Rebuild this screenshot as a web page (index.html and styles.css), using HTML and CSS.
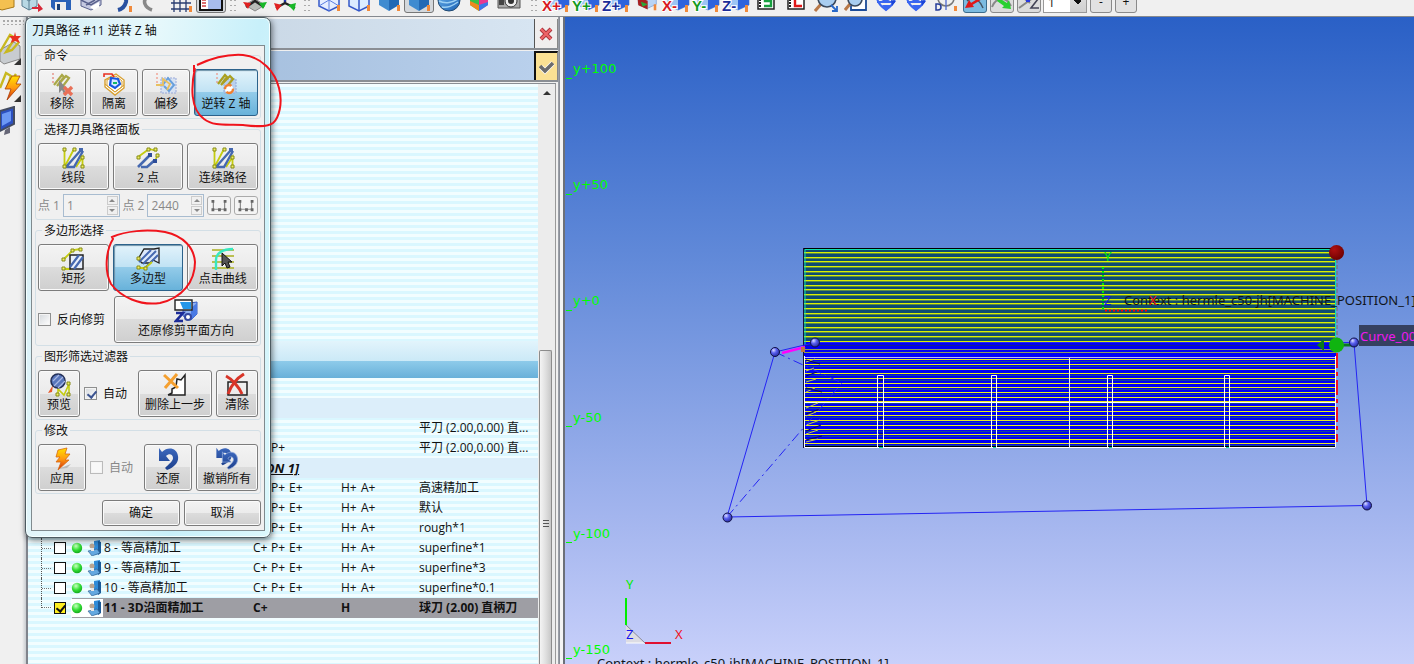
FILE: index.html
```html
<!DOCTYPE html>
<html lang="zh-CN">
<head>
<meta charset="utf-8">
<title>刀具路径 #11 逆转 Z 轴</title>
<link rel="stylesheet" href="styles.css">
</head>
<body>
<svg class="defs" aria-hidden="true">
  <defs>
    <linearGradient id="gBlue" x1="0" y1="0" x2="1" y2="1"><stop offset="0" stop-color="#6db4ee"/><stop offset="1" stop-color="#1b62b4"/></linearGradient>
    <linearGradient id="gArrow" x1="0" y1="0" x2="0" y2="1"><stop offset="0" stop-color="#3c68bd"/><stop offset="1" stop-color="#1c3f8c"/></linearGradient>
    <linearGradient id="gBolt" x1="0" y1="0" x2="0" y2="1"><stop offset="0" stop-color="#ffe000"/><stop offset=".5" stop-color="#ff9a10"/><stop offset="1" stop-color="#d02808"/></linearGradient>
    <radialGradient id="gNode" cx=".35" cy=".3" r=".8"><stop offset="0" stop-color="#d8dcff"/><stop offset=".4" stop-color="#5a60f0"/><stop offset="1" stop-color="#1c2290"/></radialGradient>
    <radialGradient id="gGreen" cx=".4" cy=".3" r=".8"><stop offset="0" stop-color="#c8ffc0"/><stop offset=".5" stop-color="#35e035"/><stop offset="1" stop-color="#0b9a18"/></radialGradient>
    <radialGradient id="gRed" cx=".35" cy=".3" r=".8"><stop offset="0" stop-color="#b01010"/><stop offset="1" stop-color="#680000"/></radialGradient>

    <symbol id="cube-solid" viewBox="0 0 24 24"><path d="M12 1 22 6 12 11 2 6z" fill="#9dd0f6"/><path d="M2 6 12 11V23L2 17z" fill="#3f8bd0"/><path d="M22 6 12 11V23l10-6z" fill="#2369b4"/><path d="M20 17h3v6h-3z" fill="#f08a3c"/></symbol>
    <symbol id="cube-wire" viewBox="0 0 24 24"><path d="M12 1 22 6v12l-10 5L2 18V6z" fill="#e6eeff" stroke="#3558c8" stroke-width="1.5"/><path d="M2 6l10 5 10-5M12 11v12M2 18l10-6 10 6" fill="none" stroke="#5c7ee0"/><path d="M20 17h3v6h-3z" fill="#f08a3c"/></symbol>
    <symbol id="cube-face" viewBox="0 0 24 24"><path d="M12 1 22 5v13l-10 5L2 18V5z" fill="#dcecff" stroke="#3558c8" stroke-width="1.5"/><path d="M2 5l10 4 10-4M12 9v14" fill="none" stroke="#3558c8" stroke-width="1.5"/><path d="M20 17h3v6h-3z" fill="#f08a3c"/></symbol>
    <symbol id="view-cube" viewBox="0 0 28 24"><path d="M16 2 27 7v10l-11 5-10-5V7z" fill="#9cc4f4" stroke="#7ea4e0"/><path d="M16 12 27 7v10l-11 5z" fill="#2e63dc"/><path d="M23 17h3v7h-3z" fill="#f08a3c"/></symbol>
    <symbol id="axes" viewBox="0 0 24 24"><path d="M12 8v7M12 15 3 20M12 15l10 5" stroke="#222" stroke-width="2.4"/><path d="M1 15l8 2-5 6z" fill="#e02020"/><path d="M23 15l-8 2 6 6z" fill="#18b828"/><path d="M12 15l-3-9h6z" fill="#2038e0"/></symbol>
    <symbol id="axes-plane" viewBox="0 0 24 24"><path d="M2 17l10-6 10 6-10 6z" fill="#b8bcb8" stroke="#888"/><path d="M12 13 3 19M12 13l9 6M12 4v9" stroke="#222" stroke-width="2.4"/><path d="M0 14l8 1-3 6z" fill="#e02020"/><path d="M24 14l-8 1 4 6z" fill="#18b828"/></symbol>
    <symbol id="lens" viewBox="0 0 24 24"><path d="M8 15 1 23" stroke="#b87848" stroke-width="3"/><circle cx="13" cy="10" r="9" fill="#a8cdf0" stroke="#39485c" stroke-width="1.6"/><path d="M8 6a7 7 0 0 1 8-2" stroke="#fff" stroke-width="2" fill="none"/><path d="M17 17l6 6m0-5v5h-5" stroke="#2868c8" stroke-width="1.8" fill="none"/></symbol>
    <symbol id="rotate" viewBox="0 0 24 24"><path d="M3 10c1 6 5 9 9 12 4-3 8-6 9-12M3 14h18M7 8c-1 6 9 6 10 0" fill="none" stroke="#3a66f0" stroke-width="2"/><path d="M8 17h9l-5 6z" fill="#3a66f0"/><path d="M17 12l5 1-4 5z" fill="#1c46d8"/></symbol>

    <symbol id="segments" viewBox="0 0 24 24"><path d="M3.500 4v17L13 3M15 21 21.500 11v10" fill="none" stroke="#c4cc10" stroke-width="1.8"/><path d="M20 4 5 21h8L22 5" fill="none" stroke="#4568b0" stroke-width="2.4"/><g fill="#eff060" stroke="#868a18"><path d="M2 2h3v3H2zM2 19h3v3H2zM12 2h3v3h-3zM20 10h3v3h-3zM20 19h3v3h-3z"/></g><path d="M18 2h4v4h-4z" fill="#4568b0"/></symbol>
    <symbol id="two-points" viewBox="0 0 24 24"><path d="M2 11 13 3l8 2" fill="none" stroke="#c4cc10" stroke-width="1.8"/><path d="M2 21 14 9M5 21h6l8-7" fill="none" stroke="#4568b0" stroke-width="2.6"/><path d="M19 15l3-7" stroke="#c4cc10" stroke-width="1.8"/><g fill="#eff060" stroke="#868a18"><path d="M1 10h3v3H1zM11 2h3v3h-3zM18 2h3v3h-3zM20 8h3v3h-3z"/></g><path d="M12 7h4v4h-4zM17 13h4v4h-4z" fill="#2d4c98"/></symbol>
    <symbol id="rect-pick" viewBox="0 0 24 24"><path d="M2 13 12 3l8-1M2 22h7l2-3" fill="none" stroke="#c4cc10" stroke-width="1.8"/><path d="M9 8h13v14H9z" fill="#e8eefa" stroke="#222" stroke-width="1.5"/><path d="M18 8 9 20m4 2 9-12" stroke="#4568b0" stroke-width="2.2"/><g fill="#eff060" stroke="#868a18"><path d="M1 11h3v3H1zM10 2h3v3h-3zM18 1h3v3h-3zM1 20h3v3H1z"/></g></symbol>
    <symbol id="poly-pick" viewBox="0 0 24 24"><path d="M2 12 8 2h10l5-1v15l-6-3-3 3H6z" fill="#dce8fa" stroke="#222" stroke-width="1.3"/><path d="M3 15 15 3M7 17 20 4m2 4L10 20" stroke="#4568b0" stroke-width="2"/><path d="M2 21h7l7-6" fill="none" stroke="#c4cc10" stroke-width="1.8"/><g fill="#eff060" stroke="#868a18"><path d="M1 10h3v3H1zM1 19h3v3H1zM8 20h3v3H8z"/></g></symbol>
    <symbol id="curve-pick" viewBox="0 0 24 24"><path d="M1 3h22M1 9h22M1 15h22M1 21h22" stroke="#aab020" stroke-width="1.6"/><path d="M5 23V13C5 6 12 2 22 2" fill="none" stroke="#38e8c0" stroke-width="2.4"/><path d="M11 6v13l3-3 2 5 3-1-2-5h4z" fill="#555" stroke="#111"/></symbol>
    <symbol id="plane-reset" viewBox="0 0 24 24"><path d="M9 5 23 3v12l-6 6-8-4z" fill="#8fb0ef" stroke="#3a5fc8"/><path d="M17 9v12l6-6V4z" fill="#4a7ae4"/><path d="M1 1h17v10H1z" fill="#fff" stroke="#222" stroke-width="1.4"/><path d="M6 3h11v7H9z" fill="#2496e8"/><path d="M2 14h7l-7 8h7" fill="none" stroke="#1c2c98" stroke-width="2.6"/><circle cx="14" cy="18" r="3" fill="#fff" stroke="#3448a0" stroke-width="2"/></symbol>
    <symbol id="preview" viewBox="0 0 24 24"><path d="M6 12 1 20l4-1z" fill="#e85828"/><path d="M11 22v-6l6 6 5-11v11" fill="none" stroke="#c4cc10" stroke-width="1.6"/><circle cx="11" cy="8" r="7" fill="#5876bc" stroke="#243058" stroke-width="1.6"/><path d="M6 8l6-6M7 13l9-9M11 15l7-7" stroke="#a8b8e4" stroke-width="1.2"/><g fill="#eff060" stroke="#868a18"><path d="M9 20h3v3H9zM20 9h3v3h-3zM20 20h3v3h-3z"/></g></symbol>
    <symbol id="delete-step" viewBox="0 0 24 24"><path d="M5 22h17V2l-4 5-4-1-1 8-4 2v4l-4 2" fill="#fff" stroke="#222" stroke-width="1.5"/><path d="M1 2l14 13M14 1 2 15" stroke="#f5a030" stroke-width="3"/></symbol>
    <symbol id="clear" viewBox="0 0 24 24"><path d="M3 9h19v13H3z" fill="none" stroke="#222" stroke-width="1.5"/><path d="M1 3c6 3 13 11 16 18M19 1C12 5 6 13 3 21" fill="none" stroke="#d83528" stroke-width="3"/></symbol>
    <symbol id="bolt" viewBox="0 0 24 24"><path d="M8 22 21 17l-4 4z" fill="#b8b8b8"/><path d="M8 3 17 1l-2 6h5l-5 6h4L8 23l3-8H6l4-5H6z" fill="url(#gBolt)" stroke="#d86810" stroke-width=".8"/></symbol>
    <symbol id="undo" viewBox="0 0 24 24"><path d="M3 1v13h11L10 9c3-3 7-2 7 2 0 3-4 6-8 10l2 2c8-3 12-8 11-14C21 1 12-1 6 5z" fill="url(#gArrow)"/></symbol>
    <symbol id="remove" viewBox="0 0 24 24"><path d="M3 1v12" stroke="#e06858" stroke-dasharray="2 2"/><path d="M4 13 12 3l2 2-7 9 9-10 3 2-6 8" stroke="#aaa848" stroke-width="2.2" fill="none"/><path d="M9 8v13l3-3 2 4 2-1-2-4h3z" fill="#888"/><path d="M14 15l8 8m0-8-8 8" stroke="#e87058" stroke-width="3.4"/></symbol>
    <symbol id="isolate" viewBox="0 0 24 24"><path d="M3 8v7l10 8 9-7V8l-8-6z" fill="#fff" stroke="#d8a030" stroke-width="1.4"/><path d="M3 12l10 8 9-7M5 8v6l8 6 7-5V9l-6-5z" fill="none" stroke="#d8a030"/><path d="M9 6l7 1 2 5-5 4-5-3z" fill="#d8e8ff" stroke="#1858e0" stroke-width="2.2"/><path d="M11 10h4v2h-4z" fill="#14b868"/><path d="M2 5V2h8l2 3" fill="none" stroke="#e83020" stroke-width="1.6"/></symbol>
    <symbol id="offset" viewBox="0 0 24 24"><path d="M3 1v12" stroke="#f0806c" stroke-dasharray="2 2"/><path d="M7 6h15v15H7z" fill="#d8e2f2" stroke="#98a8d8" stroke-dasharray="2 1"/><path d="M8 14 14 6l6 7-5 6-5-5" stroke="#68a0dc" stroke-width="2" fill="none"/><path d="M2 13h7V7l7 5-3 6" stroke="#e8c060" stroke-width="1.8" fill="none"/></symbol>
    <symbol id="reverse-z" viewBox="0 0 24 24"><path d="M3 1v12" stroke="#f0806c" stroke-dasharray="2 2"/><path d="M10 7h12v14H10z" fill="#b8d0ee" stroke="#90a8d8" stroke-dasharray="2 1"/><path d="M4 12 11 3l2 2-6 8 9-9 3 3-5 6" stroke="#aaa020" stroke-width="2.2" fill="none"/><circle cx="15" cy="17" r="4" fill="#fff" stroke="#f08030" stroke-width="2.4" stroke-dasharray="9 3"/></symbol>
    <symbol id="range" viewBox="0 0 20 16"><path d="M4 3v9h12V3" fill="none" stroke="#8c8c8c" stroke-width="1.3"/><path d="M2 2h3v3H2zM15 2h3v3h-3zM2 11h3v3H2zM9 11h3v3H9zM15 11h3v3h-3z" fill="#666"/></symbol>
    <symbol id="ball" viewBox="0 0 12 12"><circle cx="6" cy="6" r="5.2" fill="url(#gGreen)"/></symbol>
    <symbol id="machine" viewBox="0 0 16 16"><path d="M7 1l6-1v14l-6 1z" fill="#2e8bd8"/><path d="M11 1l3 1v11l-3 2z" fill="#1a5a98"/><path d="M1 11l9-2 3 4-8 3z" fill="#64a8e0" stroke="#305c88" stroke-width=".6"/><circle cx="5" cy="6" r="2.5" fill="#b8a490"/><path d="M4 8h3v3H4z" fill="#e8e8e8"/></symbol>
  </defs>
</svg>

<div class="app">
  <header class="toolbar">
    <button class="tool tool-first" aria-label="打开"><svg viewBox="0 0 24 24"><path d="M2 8h9l2-3h10v14L11 22l-9-3z" fill="#f4c050" stroke="#a87818"/></svg></button>
    <button class="tool" aria-label="导入"><svg viewBox="0 0 24 24"><path d="M3 9l6-5 9 3v11l-8 4-7-4z" fill="#b8d8e4" stroke="#587c90"/><path d="M3 9l7 4 8-6M10 13v9" fill="none" stroke="#587c90"/><path d="M13 19h6v-4l5 6-5 3v-3h-6z" fill="#d82838"/></svg></button>
    <button class="tool" aria-label="保存"><svg viewBox="0 0 24 24"><path d="M2 2h20v20H5l-3-3z" fill="#2a62b8"/><path d="M6 14h11v8H6z" fill="#eee"/><path d="M8 16h3v6H8z" fill="#184078"/></svg></button>
    <button class="tool" aria-label="打印"><svg viewBox="0 0 24 24"><path d="M2 12l9-5 11 4v6l-10 5-10-4z" fill="#c4c8e0" stroke="#58608c"/><path d="M2 12l10 5 10-6M7 17l9-5" fill="none" stroke="#58608c" stroke-width="1.5"/><path d="M11 19l9-5v5l-5 3z" fill="#fff"/></svg></button>
    <button class="tool" aria-label="撤销"><svg viewBox="0 0 24 24"><path d="M4 8c8-4 14 1 13 6-1 4-4 7-8 8" fill="none" stroke="#2850a0" stroke-width="4"/><path d="M20 18h3v6h-3z" fill="#f08a3c"/></svg></button>
    <button class="tool" aria-label="重做"><svg viewBox="0 0 24 24"><path d="M18 8C10 5 4 11 6 16c1 3 4 5 7 6" fill="none" stroke="#888" stroke-width="3.5"/></svg></button>
    <button class="tool" aria-label="网格"><svg viewBox="0 0 24 24"><path d="M2 9h20M2 15h20M2 21h20M5 4v20M11 4v20M17 4v20" stroke="#283c70" stroke-width="1.3"/><path d="M20 18h3v6h-3z" fill="#f08a3c"/></svg></button>
    <button class="tool pressed-gray" aria-label="面板"><svg viewBox="0 0 24 24"><path d="M1 1h22v21H1z" fill="#fff" stroke="#111" stroke-width="2"/><path d="M9 1h13v20H9z" fill="#a8bcec"/><path d="M3 12h4M3 15h4M3 18h4" stroke="#d04040" stroke-width="1.5"/></svg></button>
    <span class="grip"></span>
    <button class="tool" aria-label="坐标系"><svg><use href="#axes-plane"/></svg></button>
    <button class="tool" aria-label="坐标轴"><svg><use href="#axes"/></svg></button>
    <span class="grip"></span>
    <button class="tool" aria-label="线框"><svg><use href="#cube-wire"/></svg></button>
    <button class="tool" aria-label="隐藏线"><svg><use href="#cube-face"/></svg></button>
    <button class="tool" aria-label="着色"><svg><use href="#cube-solid"/></svg></button>
    <button class="tool pressed-gray" aria-label="着色加边"><svg><use href="#cube-solid"/></svg></button>
    <button class="tool" aria-label="球体"><svg viewBox="0 0 24 24"><circle cx="12" cy="12" r="11" fill="url(#gBlue)" stroke="#204870"/><path d="M2 13c6 3 14 2 20-3M5 19c6 1 10-1 16-5" fill="none" stroke="#9cd0f4" stroke-width="1.5"/></svg></button>
    <button class="tool" aria-label="颜色"><svg viewBox="0 0 24 24"><path d="M3 6l9 5v12l-9-6z" fill="#38c048"/><path d="M21 6l-9 5v12l9-6z" fill="#e83890"/><path d="M12 1l9 5-9 5-9-5z" fill="#fff080"/><path d="M3 13l9 4v6l-9-6z" fill="#f08820"/><path d="M21 14l-9 3v6l9-6z" fill="#3878e8"/></svg></button>
    <button class="tool" aria-label="截图"><svg viewBox="0 0 24 24"><path d="M1 6h22v14H1z" fill="#a8a8a8" stroke="#555"/><circle cx="14" cy="13" r="6" fill="#eee" stroke="#333"/><circle cx="14" cy="13" r="3" fill="#333"/><path d="M2 8h5v9H2z" fill="#444"/></svg></button>
    <span class="grip grip-wide"></span>
    <button class="tool" aria-label="X+"><svg class="wide"><use href="#view-cube"/><text class="axis-x" x="0" y="23">X+</text></svg></button>
    <button class="tool" aria-label="Y+"><svg class="wide"><use href="#view-cube"/><text class="axis-y" x="0" y="23">Y+</text></svg></button>
    <button class="tool" aria-label="Z+"><svg class="wide"><use href="#view-cube"/><text class="axis-z" x="0" y="23">Z+</text></svg></button>
    <button class="tool" aria-label="等轴测"><svg viewBox="0 0 28 24"><path d="M15 2 26 7v10l-11 5-10-5V7z" fill="#b8d4f4" stroke="#88a8d8"/><path d="M4 8l12 5v10L5 18z" fill="#a82020"/><path d="M8 14l8 3-6 3z" fill="#28a838"/><path d="M23 17h3v7h-3z" fill="#f08a3c"/></svg></button>
    <button class="tool" aria-label="X-"><svg class="wide"><use href="#view-cube"/><text class="axis-x" x="0" y="23">X-</text></svg></button>
    <button class="tool" aria-label="Y-"><svg class="wide"><use href="#view-cube"/><text class="axis-y" x="0" y="23">Y-</text></svg></button>
    <button class="tool" aria-label="Z-"><svg class="wide"><use href="#view-cube"/><text class="axis-z" x="0" y="23">Z-</text></svg></button>
    <button class="tool" aria-label="S"><svg viewBox="0 0 24 24"><path d="M4 1h16v20H4z" fill="#fff" stroke="#222" stroke-width="1.5"/><path d="M6 2v18" stroke="#222" stroke-width="2" stroke-dasharray="2 1"/><path d="M18 9h-7v4h6v5h-7" fill="none" stroke="#18a040" stroke-width="2.4"/></svg></button>
    <button class="tool" aria-label="L"><svg viewBox="0 0 24 24"><path d="M4 1h16v20H4z" fill="#fff" stroke="#222" stroke-width="1.5"/><path d="M6 2v18" stroke="#222" stroke-width="2" stroke-dasharray="2 1"/><path d="M11 6v12h7" fill="none" stroke="#e01818" stroke-width="2.4"/></svg></button>
    <button class="tool" aria-label="缩放"><svg><use href="#lens"/></svg></button>
    <button class="tool" aria-label="窗口缩放"><svg viewBox="0 0 24 24"><path d="M7 2h15v20H7z" fill="#fff" stroke="#1c4c98" stroke-width="1.8"/><path d="M6 16 1 22" stroke="#b87848" stroke-width="3"/><circle cx="11" cy="11" r="7" fill="#a8cdf0" stroke="#39485c" stroke-width="1.6"/></svg></button>
    <button class="tool" aria-label="旋转"><svg><use href="#rotate"/></svg></button>
    <button class="tool" aria-label="自由旋转"><svg><use href="#rotate"/></svg></button>
    <button class="tool" aria-label="直径"><svg viewBox="0 0 24 24"><circle cx="12" cy="10" r="8" fill="none" stroke="#777" stroke-width="1.6"/><path d="M12 1v21" stroke="#4c68d0" stroke-width="1.3"/><path d="M2 16h2c4 0 4 6 0 6H2z" fill="none" stroke="#243c98" stroke-width="1.5"/><path d="M20 18h3v5h-3z" fill="#f08a3c"/></svg></button>
    <button class="toggle toggle-on" aria-label="捕捉 X"><svg viewBox="0 0 24 24"><path d="M4 13c5-4 12-3 16 7" stroke="#456" stroke-width="1.5" fill="none"/><path d="M2 20l4-8 5 7z" fill="#e01818"/><path d="M7 17l10-6" stroke="#e01818" stroke-width="2.6"/></svg></button>
    <button class="toggle" aria-label="捕捉 Y"><svg viewBox="0 0 24 24"><path d="M2 19C6 9 16 8 21 18" stroke="#888" stroke-width="2" fill="none"/><path d="M9 10l8 5 2-3 2 9-9-1 2-2-7-5z" fill="#28d030"/></svg></button>
    <button class="toggle" aria-label="捕捉 Z"><svg viewBox="0 0 24 24"><path d="M2 20 20 7M4 8l9 7" stroke="#888" stroke-width="2"/><path d="M9 8h4v6H9z" fill="#2838e0"/><path d="M13 11h8l-7 9h8" fill="none" stroke="#445" stroke-width="1.6"/></svg></button>
    <select class="step" aria-label="步长"><option>1</option></select>
    <button class="step-button">-</button>
    <button class="step-button">+</button>
  </header>

  <div class="workspace">
    <nav class="rail">
      <span class="rail-grip"></span>
      <button class="rail-tool" aria-label="新建路径"><svg viewBox="0 0 22 36"><path d="M0 20 14 12l6 4v13L4 34l-4-3z" fill="#c8ccd0" stroke="#888"/><path d="M0 22 10 5l5 3-9 14 6-2 7-8" fill="none" stroke="#c8b820" stroke-width="2.4"/><path d="M15 2l1 4h5l-3 3 2 4-5-2-4 2 1-4-3-3h5z" fill="#e83020"/><path d="M21 28v7h-7z" fill="#333"/></svg></button>
      <button class="rail-tool" aria-label="计算"><svg viewBox="0 0 22 36"><path d="M0 20 6 5l5 3-4 12 9-14" fill="none" stroke="#c8b820" stroke-width="2.4"/><path d="M12 8h8l-4 8h5L7 32l4-11H5z" fill="url(#gBolt)" stroke="#a84008" stroke-width=".8"/><path d="M21 27v7h-7z" fill="#333"/></svg></button>
      <button class="rail-tool" aria-label="模拟"><svg viewBox="0 0 22 36"><path d="M0 5l14-4v17L0 25z" fill="#2c50c0" stroke="#444c60" stroke-width="2"/><path d="M2 8l9-3v10l-9 5z" fill="#6c98f4"/><path d="M5 24l5-3v6l-6 2z" fill="#667"/></svg></button>
    </nav>

    <main class="manager">
      <div class="bar bar-top"><span class="bar-fill"></span><button class="bar-button" aria-label="取消"><svg viewBox="0 0 16 16"><path d="M3 3l10 10M13 3 3 13" stroke="#a83038" stroke-width="4"/><path d="M3 3l10 10M13 3 3 13" stroke="#ee6468" stroke-width="2.4"/></svg></button></div>
      <div class="bar bar-bottom"><span class="bar-fill"></span><button class="bar-button bar-ok" aria-label="确认"><svg viewBox="0 0 16 16"><path d="M2 8l4 4 8-8" fill="none" stroke="#fff" stroke-width="5"/><path d="M1 7l5 5 8-8" fill="none" stroke="#6c6c6c" stroke-width="3.6"/></svg></button></div>
      <div class="list">
        <table class="tree">
          <colgroup><col class="c-name"><col class="c-flags"><col class="c-state"><col></colgroup>
          <tbody>
            <tr class="blank-rows"><td colspan="4"></td></tr>
            <tr class="band-light"><td colspan="4"></td></tr>
            <tr class="band-blue"><td colspan="4"></td></tr>
            <tr><td colspan="4"></td></tr>
            <tr class="group"><td colspan="4"></td></tr>
            <tr><td></td><td></td><td></td><td>平刀 (2.00,0.00) 直...</td></tr>
            <tr><td></td><td><span class="flag">C+</span><span class="flag">P+</span></td><td></td><td>平刀 (2.00,0.00) 直...</td></tr>
            <tr class="group"><td class="group-name" colspan="4">ON 1]</td></tr>
            <tr><td></td><td><span class="flag">C+</span><span class="flag">P+</span><span class="flag">E+</span></td><td><span class="flag state">H+</span><span class="flag">A+</span></td><td>高速精加工</td></tr>
            <tr><td></td><td><span class="flag">C+</span><span class="flag">P+</span><span class="flag">E+</span></td><td><span class="flag state">H+</span><span class="flag">A+</span></td><td>默认</td></tr>
            <tr><td></td><td><span class="flag">C+</span><span class="flag">P+</span><span class="flag">E+</span></td><td><span class="flag state">H+</span><span class="flag">A+</span></td><td>rough*1</td></tr>
            <tr><td><label class="node"><i class="branch"></i><input class="box" type="checkbox"><span class="badges"><svg class="i12"><use href="#ball"/></svg><svg class="i16"><use href="#machine"/></svg></span><span>8 - 等高精加工</span></label></td><td><span class="flag">C+</span><span class="flag">P+</span><span class="flag">E+</span></td><td><span class="flag state">H+</span><span class="flag">A+</span></td><td>superfine*1</td></tr>
            <tr><td><label class="node"><i class="branch"></i><input class="box" type="checkbox"><span class="badges"><svg class="i12"><use href="#ball"/></svg><svg class="i16"><use href="#machine"/></svg></span><span>9 - 等高精加工</span></label></td><td><span class="flag">C+</span><span class="flag">P+</span><span class="flag">E+</span></td><td><span class="flag state">H+</span><span class="flag">A+</span></td><td>superfine*3</td></tr>
            <tr><td><label class="node"><i class="branch"></i><input class="box" type="checkbox"><span class="badges"><svg class="i12"><use href="#ball"/></svg><svg class="i16"><use href="#machine"/></svg></span><span>10 - 等高精加工</span></label></td><td><span class="flag">C+</span><span class="flag">P+</span><span class="flag">E+</span></td><td><span class="flag state">H+</span><span class="flag">A+</span></td><td>superfine*0.1</td></tr>
            <tr class="current"><td><label class="node"><i class="branch branch-last"></i><input class="box box-yellow" type="checkbox" checked><span class="badges"><svg class="i12"><use href="#ball"/></svg><svg class="i16"><use href="#machine"/></svg></span><span class="node-text">11 - 3D沿面精加工</span></label></td><td>C+</td><td>H</td><td>球刀 (2.00) 直柄刀</td></tr>
          </tbody>
        </table>
        <div class="scroll"><span class="scroll-up"></span><span class="scroll-space"></span><span class="thumb"><i></i></span></div>
      </div>
    </main>
    <div class="splitter"></div>

    <section class="viewport">
      <svg class="scene" viewBox="565 17 849 647" preserveAspectRatio="xMinYMin slice">
        <defs>
          <pattern id="cutTop" x="0" y="252" width="20" height="14" patternUnits="userSpaceOnUse"><path d="M0 0h20v1H0zM0 5h20v1H0zM0 9h20v1H0z" fill="#dcf000"/><path d="M0 1h20v1H0zM0 6h20v1H0zM0 10h20v1H0z" fill="#5c8c48"/></pattern>
          <pattern id="cutLow" x="0" y="252" width="20" height="14" patternUnits="userSpaceOnUse"><path d="M0 0h20v1H0zM0 5h20v1H0zM0 9h20v1H0z" fill="#e8ec20"/><path d="M0 2h20v1H0zM0 11h20v1H0z" fill="#10409c"/></pattern>
        </defs>
        <g class="ruler">
          <text x="573" y="73">y+100</text><text x="573" y="189">y+50</text><text x="573" y="305">y+0</text><text x="573" y="422">y-50</text><text x="573" y="538">y-100</text><text x="573" y="654">y-150</text>
          <path d="M566 78.500h6M566 194.500h6M566 310.500h6M566 426.500h6M566 542.500h6M566 658.500h6"/>
        </g>
        <path d="M804 248h532v94H804z" fill="#0f4c70"/>
        <path d="M804 342h532v106H804z" fill="#0000f4"/>
        <path d="M804 251h532v91H804z" fill="url(#cutTop)"/>
        <path d="M804 358h532v88H804z" fill="url(#cutLow)"/>
        <path d="M804 345.500h532" stroke="#101c9c"/>
        <path d="M804 349.500h532M804 352.500h532" stroke="#8f9c58"/>
        <path d="M804 248.500h532M804 446.500h532" stroke="#000"/>
        <path d="M805 345V249.500h531M1335.500 249v96" stroke="#10e0b0" fill="none"/>
        <path d="M803.500 248v200" stroke="#14143c"/>
        <path d="M805 357.500h531" stroke="#b8b8ff"/>
        <path d="M805 402.500h531" stroke="#fff"/>
        <path d="M804.500 356v91.500h531V356" fill="none" stroke="#fff"/>
        <path d="M806 362l9-3M806 371l8-3M806 382l10-3M806 392l9-4M806 408l12-5M806 416l10-4M806 425l14-5M806 434l12-4M806 442l12-3" stroke="#c8cc50"/>
        <path d="M806 360l14 4M806 376l11-4M806 388l16 4M806 414l14-5M806 431l15-6M806 440l16-4" stroke="#080850"/>
        <g fill="none" stroke="#fff"><path d="M877.500 447v-71.500h6V447M991.500 447v-71.500h5V447M1107.500 447v-71.500h5V447M1224.500 447v-71.500h5V447"/></g>
        <path d="M879 447.500h4M993 447.500h3M1109 447.500h3M1226 447.500h3" stroke="#10d8a0"/>
        <path d="M879 380h4M879 391h4M879 400h4M879 418h4M879 434h4" stroke="#06063c"/>
        <path d="M1069.500 358v89" stroke="#ececff"/>
        <g fill="none" stroke="#2424f4">
          <path d="M815 342.500 775 352 727 517 1367 505.500 1354 342.500H815"/>
          <path d="M727 517 842 383 775 352" stroke-dasharray="10 4 2 4"/>
        </g>
        <path d="M782 353l23-6" stroke="#f0f" stroke-width="2.500"/>
        <path d="M801 347h4v5h-4z" fill="#c07840"/>
        <path d="M1337 353v89" stroke="#f01020" stroke-width="2" stroke-dasharray="15 4 4 4"/>
        <path d="M1337 259v80" stroke="#7c6c60" stroke-dasharray="4 2"/>
        <path d="M1340 345h14" stroke="#0a7a20" stroke-width="3"/>
        <path d="M1317 345l7-6v12z" fill="#0a7a20"/>
        <circle cx="1336.500" cy="345" r="7.500" fill="#10b410"/>
        <circle cx="1336.500" cy="252.500" r="7.500" fill="url(#gRed)"/>
        <g fill="url(#gNode)" stroke="#101044"><circle cx="815" cy="342.500" r="4.500"/><circle cx="775" cy="352" r="4.500"/><circle cx="727.500" cy="517.500" r="4.500"/><circle cx="1367" cy="505.500" r="4.500"/><circle cx="1354" cy="342.500" r="4.500"/></g>
        <path d="M1103 267v43" stroke="#0e0" stroke-width="2" stroke-dasharray="2 2"/>
        <path d="M1105 310.500h43" stroke="#f00" stroke-width="2" stroke-dasharray="2 2"/>
        <text class="scene-text" x="1124" y="305">Context : hermle_c50-jh[MACHINE_POSITION_1]</text>
        <text class="scene-text green" x="1104" y="261">Y</text>
        <text class="scene-text blue" x="1104" y="305">Z</text>
        <text class="scene-text red" x="1149" y="305">X</text>
        <path d="M1359 325h55v21h-55z" fill="#354060"/>
        <text class="scene-text magenta" x="1360" y="341">Curve_001</text>
        <path d="M626 625v18h19z" fill="#dcdce4"/>
        <path d="M626 643h19" stroke="#fff"/>
        <path d="M626 625l19 18" stroke="#889"/>
        <path d="M626 598v27" stroke="#0e0" stroke-width="2"/>
        <path d="M645 643h26" stroke="#e01030" stroke-width="2"/>
        <text class="scene-text green" x="626" y="589">Y</text>
        <text class="scene-text blue" x="626" y="639">Z</text>
        <text class="scene-text red" x="675" y="639">X</text>
        <text class="scene-text" x="597" y="668">Context : hermle_c50-jh[MACHINE_POSITION_1]</text>
      </svg>
    </section>
  </div>

  <form class="dialog">
    <h1 class="dialog-title">刀具路径 #11 逆转 Z 轴</h1>
    <div class="panel">
      <fieldset class="group-box">
        <legend>命令</legend>
        <div class="commands">
          <button type="button" class="btn"><svg class="icon"><use href="#remove"/></svg>移除</button>
          <button type="button" class="btn"><svg class="icon"><use href="#isolate"/></svg>隔离</button>
          <button type="button" class="btn"><svg class="icon"><use href="#offset"/></svg>偏移</button>
          <button type="button" class="btn btn-on"><svg class="icon"><use href="#reverse-z"/></svg>逆转 Z 轴</button>
        </div>
      </fieldset>
      <fieldset class="group-box">
        <legend>选择刀具路径面板</legend>
        <div class="thirds">
          <button type="button" class="btn"><svg class="icon"><use href="#segments"/></svg>线段</button>
          <button type="button" class="btn"><svg class="icon"><use href="#two-points"/></svg>2 点</button>
          <button type="button" class="btn"><svg class="icon"><use href="#segments"/></svg>连续路径</button>
        </div>
        <div class="points">
          <label for="p1">点 1</label>
          <span class="spin"><input id="p1" type="text" value="1" disabled><span class="spin-buttons"><button type="button" disabled aria-label="增加"><i class="up"></i></button><button type="button" disabled aria-label="减少"><i class="down"></i></button></span></span>
          <label for="p2">点 2</label>
          <span class="spin"><input id="p2" type="text" value="2440" disabled><span class="spin-buttons"><button type="button" disabled aria-label="增加"><i class="up"></i></button><button type="button" disabled aria-label="减少"><i class="down"></i></button></span></span>
          <button type="button" class="mini" aria-label="范围起点"><svg><use href="#range"/></svg></button>
          <button type="button" class="mini" aria-label="范围终点"><svg><use href="#range"/></svg></button>
        </div>
      </fieldset>
      <fieldset class="group-box">
        <legend>多边形选择</legend>
        <div class="thirds">
          <button type="button" class="btn"><svg class="icon"><use href="#rect-pick"/></svg>矩形</button>
          <button type="button" class="btn btn-on"><svg class="icon"><use href="#poly-pick"/></svg>多边型</button>
          <button type="button" class="btn"><svg class="icon"><use href="#curve-pick"/></svg>点击曲线</button>
        </div>
        <div class="reverse">
          <label class="check"><input type="checkbox">反向修剪</label>
          <button type="button" class="btn"><svg class="icon"><use href="#plane-reset"/></svg>还原修剪平面方向</button>
        </div>
      </fieldset>
      <fieldset class="group-box">
        <legend>图形筛选过滤器</legend>
        <div class="filter">
          <button type="button" class="btn"><svg class="icon"><use href="#preview"/></svg>预览</button>
          <label class="check"><input type="checkbox" checked>自动</label>
          <button type="button" class="btn"><svg class="icon"><use href="#delete-step"/></svg>删除上一步</button>
          <button type="button" class="btn"><svg class="icon"><use href="#clear"/></svg>清除</button>
        </div>
      </fieldset>
      <fieldset class="group-box">
        <legend>修改</legend>
        <div class="modify">
          <button type="button" class="btn"><svg class="icon"><use href="#bolt"/></svg>应用</button>
          <label class="check check-off"><input type="checkbox" disabled>自动</label>
          <button type="button" class="btn"><svg class="icon"><use href="#undo"/></svg>还原</button>
          <button type="button" class="btn"><svg class="icon" viewBox="0 0 24 24"><use href="#undo" x="-1" y="0" width="19" height="19"/><use href="#undo" x="5" y="4" width="19" height="19" stroke="#8aa4d8" stroke-width="1"/></svg>撤销所有</button>
        </div>
      </fieldset>
      <div class="actions">
        <button type="button" class="btn btn-flat">确定</button>
        <button type="button" class="btn btn-flat">取消</button>
      </div>
    </div>
  </form>

  <svg class="marks" viewBox="0 0 300 320" aria-hidden="true">
    <path d="M194 72V65M197 65C212 58 228 54 243 55 262 57 275 72 279 88 283 103 279 118 273 123 266 128 252 126 243 125 228 124 214 127 204 119 190 109 191 86 195 68"/>
    <path d="M112 237C126 231 146 229 165 232 184 236 194 248 195 262 195 282 182 298 160 303 140 306 121 297 111 284 104 271 106 250 113 239z"/>
  </svg>
</div>
</body>
</html>
```

FILE: styles.css
```css
* { box-sizing: border-box; }

body {
  margin: 0;
  background: #f0f0f0;
  color: #111;
  font: 12px/16px "Open Sans", "Noto Sans CJK SC", sans-serif;
}

button, input, select { font: inherit; color: inherit; margin: 0; padding: 0; }
button { cursor: default; }
svg { display: block; flex: none; }
.defs { position: absolute; width: 0; height: 0; }

.app {
  position: relative;
  display: flex;
  flex-direction: column;
  height: 100vh;
  overflow: hidden;
}

/* toolbar */
.toolbar {
  display: flex;
  align-items: flex-end;
  flex: none;
  height: 17px;
  padding-bottom: 3px;
  overflow: hidden;
  background: #f0f0f0;
  border-bottom: 1px solid #85898f;
}
.tool {
  display: flex;
  justify-content: center;
  flex: none;
  width: 30px;
  height: 26px;
  border: 1px solid transparent;
  background: none;
}
.tool-first { width: 16px; justify-content: flex-end; }
.tool svg, .toggle svg { width: 24px; height: 24px; }
.tool .wide { width: 28px; }
.pressed-gray { border: 1px solid #777; border-radius: 3px; background: #d4d8dc; }
.axis-x, .axis-y, .axis-z {
  font: bold 15px "Liberation Sans", sans-serif;
  paint-order: stroke;
  stroke: #fff;
  stroke-width: 2px;
}
.axis-x { fill: #d81820; }
.axis-y { fill: #149a20; }
.axis-z { fill: #1c2c98; }
.grip {
  flex: none;
  width: 7px;
  height: 20px;
  margin: 0 4px 0 3px;
  background: radial-gradient(circle, #aaa 1px, transparent 1px) 0 0 / 4px 5px;
}
.grip-wide { margin: 0 4px 0 6px; }
.toggle {
  display: flex;
  justify-content: center;
  flex: none;
  width: 24px;
  height: 26px;
  margin: 0 1px 0 2px;
  border: 1px solid #8a8a8a;
  border-radius: 3px;
  background: #dcdcdc;
}
.toggle-on { border-color: #3c6c8c; background: #7cbbe0; }
.step {
  flex: none;
  width: 44px;
  height: 26px;
  margin: 0 3px 0 1px;
  padding: 6px 0 0 4px;
  border: 1px solid #999;
  appearance: none;
  background:
    linear-gradient(45deg, transparent 50%, #111 50%) right 8px bottom 8px / 4px 4px no-repeat,
    linear-gradient(-45deg, transparent 50%, #111 50%) right 4px bottom 8px / 4px 4px no-repeat,
    linear-gradient(#e4e4e4, #d0d0d0) right / 16px 100% no-repeat,
    #fff;
}
.step-button {
  flex: none;
  width: 22px;
  height: 26px;
  margin-right: 3px;
  padding-top: 4px;
  border: 1px solid #8a8a8a;
  border-radius: 3px;
  background: #e2e2e2;
}

/* left rail */
.workspace { display: flex; flex: 1; min-height: 0; }
.rail {
  flex: none;
  width: 28px;
  background: linear-gradient(90deg, #f0f0f0 22px, #c8ccd0);
  border-right: 2px solid #80848c;
}
.rail-grip {
  display: block;
  height: 6px;
  margin: 2px 2px 4px;
  background: radial-gradient(circle, #aaa 1px, transparent 1px) 0 0 / 4px 4px;
}
.rail-tool { display: block; width: 22px; height: 38px; border: 0; background: none; }
.rail-tool svg { width: 22px; height: 36px; }

/* manager */
.manager {
  display: flex;
  flex-direction: column;
  flex: 0 0 530px;
  min-width: 0;
  padding-top: 2px;
}
.bar { display: flex; flex: none; height: 31px; border-bottom: 2px solid #8a8e94; }
.bar-fill { flex: 1; background: linear-gradient(90deg, #c0cedc, #d7e5f2); }
.bar-bottom { margin-top: 1px; }
.bar-bottom .bar-fill { background: linear-gradient(90deg, #98b4d4, #b9d0ec); }
.bar-button {
  display: flex;
  align-items: center;
  justify-content: center;
  width: 24px;
  border: 0;
  border-left: 1px solid #555;
  border-right: 1px solid #888;
  background: #f0eeee;
}
.bar-ok {
  border-left: 2px solid #111;
  border-top: 2px solid #111;
  background: #fbe193;
}
.bar-button svg { width: 16px; height: 16px; }
.list {
  display: flex;
  flex: 1;
  min-height: 0;
  margin: 1px 2px 0 0;
  padding-left: 2px;
  border-top: 1px solid #8a8e94;
  background: repeating-linear-gradient(#f2fdff 0 3px, #daf7ff 3px 6px);
}
.tree {
  flex: 1;
  align-self: flex-start;
  table-layout: fixed;
  border-collapse: collapse;
  min-width: 0;
}
.tree td { height: 20px; padding: 0; line-height: 20px; white-space: nowrap; overflow: hidden; }
.c-name { width: 223px; }
.c-flags { width: 88px; }
.c-state { width: 78px; }
.tree .blank-rows td { height: 257px; }
.tree .band-light td { height: 20px; background: linear-gradient(#e2f4fc, #cbe9f7); }
.tree .band-blue td { height: 17px; line-height: 16px; background: linear-gradient(#8ecbea, #68b0d9); }
.group { background: #dceefa; }
.tree .group-name { padding-left: 235px; font-size: 13px; font-weight: bold; font-style: italic; text-decoration: underline; }
.flag { display: inline-block; width: 18px; }
.state { width: 20px; }
.node { display: flex; align-items: center; height: 20px; padding-left: 11px; }
.branch {
  width: 10px;
  height: 20px;
  margin-right: 3px;
  border-left: 1px dotted #555;
  background: linear-gradient(90deg, #777 50%, transparent 50%) 0 10px / 2px 1px repeat-x;
}
.branch-last { height: 10px; align-self: flex-start; background-position: 0 9px; }
.box {
  position: relative;
  flex: none;
  width: 12px;
  height: 12px;
  margin-right: 5px;
  appearance: none;
  border: 1px solid #111;
  background: #fff;
}
.box-yellow { background: #ffee20; }
.box:checked::after, .check input:checked::after {
  content: "";
  position: absolute;
  left: 3px;
  top: 0;
  width: 4px;
  height: 7px;
  border: solid #111;
  border-width: 0 2px 2px 0;
  rotate: 40deg;
}
.badges { display: flex; align-items: center; gap: 4px; height: 18px; margin-right: 1px; }
.i12 { width: 12px; height: 12px; }
.i16 { width: 16px; height: 16px; }
.current { background: linear-gradient(90deg, transparent 42px, #9e9ea4 42px); font-weight: bold; }
.current .badges { background: #fff; }

.scroll {
  display: flex;
  flex-direction: column;
  align-items: center;
  flex: none;
  width: 18px;
  background: #ececec;
  border-right: 1px solid #999;
}
.scroll-up {
  margin-top: 7px;
  border: 4px solid transparent;
  border-top: 0;
  border-bottom: 4px solid #333;
}
.scroll-space { height: 255px; }
.thumb {
  display: flex;
  align-items: center;
  justify-content: center;
  flex: 1;
  align-self: stretch;
  margin: 0 3px 0 1px;
  padding-top: 34px;
  border: 1px solid #8c8c8c;
  border-bottom: 0;
  border-radius: 2px 2px 0 0;
  background: linear-gradient(90deg, #f4f4f4, #e0e0e0 50%, #c8c8c8);
}
.thumb i { width: 6px; height: 9px; background: repeating-linear-gradient(#555 0 1px, transparent 1px 3px); }
.splitter {
  flex: none;
  width: 7px;
  border-left: 1px solid #9a9ea6;
  border-right: 2px solid #6c7078;
  background: linear-gradient(90deg, #8b8f98 1px, #f4f4f4 1px);
}

/* 3D view */
.viewport {
  flex: 1;
  min-width: 0;
  overflow: hidden;
  background: linear-gradient(#2a60c6 0%, #5f88d8 36%, #a6b7ef 79%, #c8d0fa 100%);
}
.scene { width: 100%; height: 100%; }
.ruler text { font: 13px "DejaVu Sans", sans-serif; fill: #0f0; }
.ruler path { stroke: #0f0; }
.scene-text { font: 13px "Noto Sans", sans-serif; fill: #101418; }
.green { fill: #0e0; }
.blue { fill: #1414f0; }
.red { fill: #f01020; }
.magenta { fill: #f018f0; }

/* dialog window */
.dialog {
  position: absolute;
  left: 25px;
  top: 17px;
  width: 246px;
  padding: 3px 5px 6px;
  border: 1px solid #4c5a60;
  border-radius: 7px;
  background: linear-gradient(100deg, #d4edf6, #e6f8fb 40%, #c8f0fa 70%, #dcf8fc);
  box-shadow: 1px 2px 6px rgba(0, 0, 0, .55), inset 0 0 0 1px #f4ffff;
}
.dialog-title { margin: 0 0 5px 1px; font-size: 12px; line-height: 19px; font-weight: normal; }
.panel {
  display: flex;
  flex-direction: column;
  gap: 3px;
  padding: 2px 3px 4px;
  border: 1px solid #808a8e;
  background: #f0f0f0;
}
.group-box {
  min-width: 0;
  margin: 0;
  padding: 7px 2px 2px;
  border: 1px solid #d3dfe6;
  border-radius: 3px;
}
.group-box legend { height: 14px; margin-left: 4px; padding: 0 2px; line-height: 15px; }
.commands, .thirds, .points, .reverse, .filter, .modify { display: grid; gap: 4px; align-items: center; }
.commands { grid-template-columns: 48px 48px 48px 1fr; }
.thirds { grid-template-columns: repeat(3, 1fr); }
.points { grid-template-columns: auto 1fr auto 1fr 24px 24px; gap: 3px; margin-top: 4px; color: #888; }
.reverse { grid-template-columns: 1fr 144px; margin-top: 5px; }
.filter { grid-template-columns: 42px 1fr 74px 42px; }
.modify { grid-template-columns: 48px 1fr 48px 62px; }

.btn {
  display: flex;
  flex-direction: column;
  align-items: center;
  min-width: 0;
  height: 47px;
  padding-top: 2px;
  border: 1px solid #7c7c7c;
  border-radius: 3px;
  background: linear-gradient(#f3f3f3, #ebebeb 50%, #dcdcdc 50%, #cfcfcf);
  box-shadow: inset 0 0 0 1px #fafafa;
  white-space: nowrap;
}
.btn-on {
  border-color: #2c628b;
  background: linear-gradient(#e2f3fb, #c0e2f4 50%, #93cbe9 50%, #68b2da);
  box-shadow: inset 1px 1px 1px #6d92a8;
}
.icon { width: 24px; height: 24px; }
.btn-flat { justify-content: center; height: 26px; padding: 0; }
.actions { display: grid; grid-template-columns: 78px 77px; gap: 4px; justify-content: end; margin-top: 3px; }

.spin { display: flex; min-width: 0; height: 23px; border: 1px solid #a8bcd0; background: #f2f2f2; }
.spin input { width: 0; flex: 1; padding-left: 3px; border: 0; background: none; color: #888; }
.spin-buttons { display: flex; flex-direction: column; gap: 1px; width: 11px; margin: 1px; }
.spin-buttons button { display: flex; align-items: center; justify-content: center; flex: 1; border: 1px solid #ccc; background: #f0f0f0; }
.up, .down { border: 3px solid transparent; }
.up { border-top: 0; border-bottom-color: #888; }
.down { border-bottom: 0; border-top-color: #888; }
.mini { display: flex; align-items: center; justify-content: center; height: 19px; border: 1px solid #aaa; border-radius: 3px; background: #f4f4f4; }
.mini svg { width: 20px; height: 15px; }

.check { display: flex; align-items: center; gap: 6px; white-space: nowrap; }
.check input {
  position: relative;
  width: 13px;
  height: 13px;
  appearance: none;
  border: 1px solid #8e8f8f;
  background: linear-gradient(135deg, #d4d8dc, #fff);
  box-shadow: inset 0 0 0 1px #f4f4f4;
}
.check input:checked::after { left: 4px; top: 1px; border-color: #3c5490; }
.check-off { color: #888; }
.check-off input { border-color: #bbb; background: #f8f8f8; }

/* hand-drawn callouts over the dialog */
.marks {
  position: absolute;
  left: 0;
  top: 0;
  width: 300px;
  height: 320px;
  pointer-events: none;
  fill: none;
  stroke: #f0141c;
  stroke-width: 2;
}
```
